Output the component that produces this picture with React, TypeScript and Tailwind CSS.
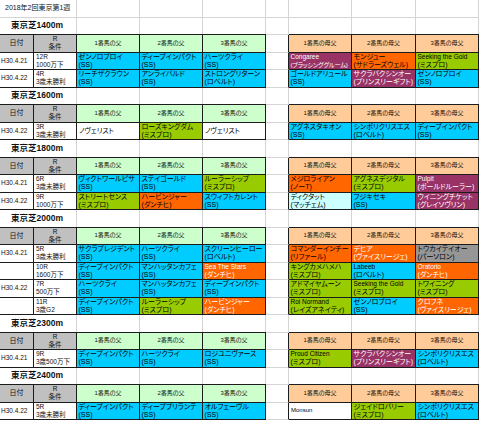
import React from 'react';

type Horse = [string, string, string]; // name, line, colour key

type RaceRow = {
  date: string;
  r: string;
  cond: string;
  sires: Horse[];
  dams: Horse[];
};

type Section = { title: string; rows: RaceRow[] };

const GRID = 'grid grid-cols-[34px_43px_63px_63px_63px_23px_63px_64px_63px] h-[17.5px]';
const LIGHT = 'border-r border-b border-[#d4d4d4]';
const DARK = 'border-r border-b border-[#1c1c1c]';
const FONT = "[font-family:'Liberation_Sans','Noto_Sans_CJK_JP',sans-serif] [font-feature-settings:'palt']";

const fill: Record<string, string> = {
  c: 'bg-[#00ccff] text-black',
  l: 'bg-[#99cc00] text-black',
  o: 'bg-[#ff6600] text-black',
  ow: 'bg-[#ff6600] text-white',
  p: 'bg-[#993366] text-white',
  g: 'bg-[#969696] text-black',
  lc: 'bg-[#ccffff] text-black',
  w: 'bg-white text-black',
};

const sections: Section[] = [
  {
    title: '東京芝1400m',
    rows: [
      {
        date: 'H30.4.21',
        r: '12R',
        cond: '1000万下',
        sires: [
          ['ゼンノロブロイ', '(SS)', 'c'],
          ['ディープインパクト', '(SS)', 'c'],
          ['ハーツクライ', '(SS)', 'c'],
        ],
        dams: [
          ['Congaree', '(ブラッシンググルーム)', 'p'],
          ['モンジュー', '(サドラーズウェル)', 'o'],
          ['Seeking the Gold', '(ミスプロ)', 'l'],
        ],
      },
      {
        date: 'H30.4.22',
        r: '4R',
        cond: '3歳未勝利',
        sires: [
          ['リーチザクラウン', '(SS)', 'c'],
          ['アンライバルド', '(SS)', 'c'],
          ['ストロングリターン', '(ロベルト)', 'c'],
        ],
        dams: [
          ['ゴールドアリュール', '(SS)', 'c'],
          ['サクラバクシンオー', '(プリンスリーギフト)', 'p'],
          ['ゼンノロブロイ', '(SS)', 'c'],
        ],
      },
    ],
  },
  {
    title: '東京芝1600m',
    rows: [
      {
        date: 'H30.4.22',
        r: '3R',
        cond: '3歳未勝利',
        sires: [
          ['ノヴェリスト', '', 'w'],
          ['ローズキングダム', '(ミスプロ)', 'l'],
          ['ノヴェリスト', '', 'w'],
        ],
        dams: [
          ['アグネスタキオン', '(SS)', 'c'],
          ['シンボリクリスエス', '(ロベルト)', 'c'],
          ['ディープインパクト', '(SS)', 'c'],
        ],
      },
    ],
  },
  {
    title: '東京芝1800m',
    rows: [
      {
        date: 'H30.4.21',
        r: '6R',
        cond: '3歳未勝利',
        sires: [
          ['ヴィクトワールピサ', '(SS)', 'c'],
          ['ステイゴールド', '(SS)', 'c'],
          ['ルーラーシップ', '(ミスプロ)', 'l'],
        ],
        dams: [
          ['メジロライアン', '(ノーT)', 'o'],
          ['アグネスデジタル', '(ミスプロ)', 'l'],
          ['Pulpit', '(ボールドルーラー)', 'p'],
        ],
      },
      {
        date: 'H30.4.22',
        r: '9R',
        cond: '1000万下',
        sires: [
          ['ストリートセンス', '(ミスプロ)', 'l'],
          ['ハービンジャー', '(ダンチヒ)', 'o'],
          ['スウィフトカレント', '(SS)', 'c'],
        ],
        dams: [
          ['ディクタット', '(マッチェム)', 'lc'],
          ['フジキセキ', '(SS)', 'c'],
          ['ウイニングチケット', '(グレイソヴリン)', 'p'],
        ],
      },
    ],
  },
  {
    title: '東京芝2000m',
    rows: [
      {
        date: 'H30.4.21',
        r: '5R',
        cond: '3歳未勝利',
        sires: [
          ['サクラプレジデント', '(SS)', 'c'],
          ['ハーツクライ', '(SS)', 'c'],
          ['スクリーンヒーロー', '(ロベルト)', 'c'],
        ],
        dams: [
          ['コマンダーインチー', '(リファール)', 'o'],
          ['デヒア', '(ヴァイスリージェ)', 'ow'],
          ['トウカイテイオー', '(パーソロン)', 'g'],
        ],
      },
      {
        date: '',
        r: '10R',
        cond: '1600万下',
        sires: [
          ['ディープインパクト', '(SS)', 'c'],
          ['マンハッタンカフェ', '(SS)', 'c'],
          ['Sea The Stars', '(ダンチヒ)', 'ow'],
        ],
        dams: [
          ['キングカメハメハ', '(ミスプロ)', 'l'],
          ['Labeeb', '(ロベルト)', 'c'],
          ['Oratorio', '(ダンチヒ)', 'ow'],
        ],
      },
      {
        date: 'H30.4.22',
        r: '7R',
        cond: '500万下',
        sires: [
          ['ハーツクライ', '(SS)', 'c'],
          ['マンハッタンカフェ', '(SS)', 'c'],
          ['ディープインパクト', '(SS)', 'c'],
        ],
        dams: [
          ['アドマイヤムーン', '(ミスプロ)', 'l'],
          ['Seeking the Gold', '(ミスプロ)', 'l'],
          ['トワイニング', '(ミスプロ)', 'l'],
        ],
      },
      {
        date: '',
        r: '11R',
        cond: '3歳G2',
        sires: [
          ['ディープインパクト', '(SS)', 'c'],
          ['ルーラーシップ', '(ミスプロ)', 'l'],
          ['ハービンジャー', '(ダンチヒ)', 'ow'],
        ],
        dams: [
          ['Roi Normand', '(レイズアネイティ)', 'l'],
          ['ゼンノロブロイ', '(SS)', 'c'],
          ['クロフネ', '(ヴァイスリージェ)', 'ow'],
        ],
      },
    ],
  },
  {
    title: '東京芝2300m',
    rows: [
      {
        date: 'H30.4.21',
        r: '9R',
        cond: '3歳500万下',
        sires: [
          ['ディープインパクト', '(SS)', 'c'],
          ['ハーツクライ', '(SS)', 'c'],
          ['ロジユニヴァース', '(SS)', 'c'],
        ],
        dams: [
          ['Proud Citizen', '(ミスプロ)', 'l'],
          ['サクラバクシンオー', '(プリンスリーギフト)', 'p'],
          ['シンボリクリスエス', '(ロベルト)', 'c'],
        ],
      },
    ],
  },
  {
    title: '東京芝2400m',
    rows: [
      {
        date: 'H30.4.22',
        r: '5R',
        cond: '3歳未勝利',
        sires: [
          ['ディープインパクト', '(SS)', 'c'],
          ['ディープブリランテ', '(SS)', 'c'],
          ['オルフェーヴル', '(SS)', 'c'],
        ],
        dams: [
          ['Monsun', '', 'w'],
          ['ジェイドロバリー', '(ミスプロ)', 'l'],
          ['シンボリクリスエス', '(ロベルト)', 'c'],
        ],
      },
    ],
  },
];

function PlainRow({ children, bold }: { children: React.ReactNode; bold?: boolean }) {
  return (
    <div className={GRID}>
      <div
        className={`col-span-2 flex items-center whitespace-nowrap ${LIGHT} ${
          bold ? 'pl-[11px] text-[8.5px] font-bold' : 'pl-[5px] text-[7px]'
        }`}
      >
        {children}
      </div>
      {Array.from({ length: 7 }).map((_, i) => (
        <div key={i} className={LIGHT} />
      ))}
    </div>
  );
}

function HeaderRow() {
  const top = 'shadow-[0_-1px_0_#1c1c1c]';
  const sire = `${DARK} ${top} flex items-center justify-center bg-[#ccffcc] text-[6px]`;
  const dam = `${DARK} ${top} flex items-center justify-center bg-[#ffcc99] text-[6px]`;
  return (
    <div className={GRID}>
      <div className={`${DARK} ${top} flex items-center justify-center bg-[#c0c0c0] text-[7px]`}>日付</div>
      <div
        className={`${DARK} ${top} flex flex-col items-center overflow-hidden bg-[#c0c0c0] text-[6.5px] leading-[8px]`}
      >
        <span>R</span>
        <span>条件</span>
      </div>
      <div className={sire}>1番馬の父</div>
      <div className={sire}>2番馬の父</div>
      <div className={sire}>3番馬の父</div>
      <div className="border-r border-b border-r-[#1c1c1c] border-b-[#d4d4d4]" />
      <div className={dam}>1番馬の母父</div>
      <div className={dam}>2番馬の母父</div>
      <div className={dam}>3番馬の母父</div>
    </div>
  );
}

function HorseCell({ horse }: { horse: Horse }) {
  const [name, line, key] = horse;
  const latin = /^[A-Za-z]/.test(name);
  if (!line) {
    return (
      <div
        className={`${DARK} ${fill[key]} flex items-center overflow-hidden whitespace-nowrap pl-[2px] ${
          latin ? 'text-[6px]' : 'text-[7px]'
        }`}
      >
        {name}
      </div>
    );
  }
  // long pedigree lines are squeezed a little so they stay inside the cell
  const long = line.length >= 12;
  return (
    <div
      className={`${DARK} ${fill[key]} flex flex-col overflow-hidden whitespace-nowrap pl-[1.5px] text-[7px] leading-[8.25px]`}
    >
      <span className={latin ? 'text-[6.5px]' : ''}>{name}</span>
      <span className={long ? 'text-[6.2px] tracking-[-0.2px]' : ''}>{line}</span>
    </div>
  );
}

function DataRow({ row }: { row: RaceRow }) {
  return (
    <div className={GRID}>
      <div className={`${DARK} flex items-center overflow-hidden pl-[1px] text-[6.5px]`}>{row.date}</div>
      <div
        className={`${DARK} flex flex-col overflow-hidden whitespace-nowrap pl-[2px] text-[6.5px] leading-[8.25px]`}
      >
        <span>{row.r}</span>
        <span>{row.cond}</span>
      </div>
      {row.sires.map((h, i) => (
        <HorseCell key={i} horse={h} />
      ))}
      <div className="border-r border-b border-r-[#1c1c1c] border-b-[#d4d4d4]" />
      {row.dams.map((h, i) => (
        <HorseCell key={i} horse={h} />
      ))}
    </div>
  );
}

export default function App() {
  return (
    <div className={`w-[479px] h-[421px] overflow-hidden bg-white text-[#111] ${FONT}`}>
      <PlainRow>2018年2回東京第1週</PlainRow>
      {sections.map((s) => (
        <React.Fragment key={s.title}>
          <PlainRow bold>{s.title}</PlainRow>
          <HeaderRow />
          {s.rows.map((r, i) => (
            <DataRow key={i} row={r} />
          ))}
        </React.Fragment>
      ))}
    </div>
  );
}
